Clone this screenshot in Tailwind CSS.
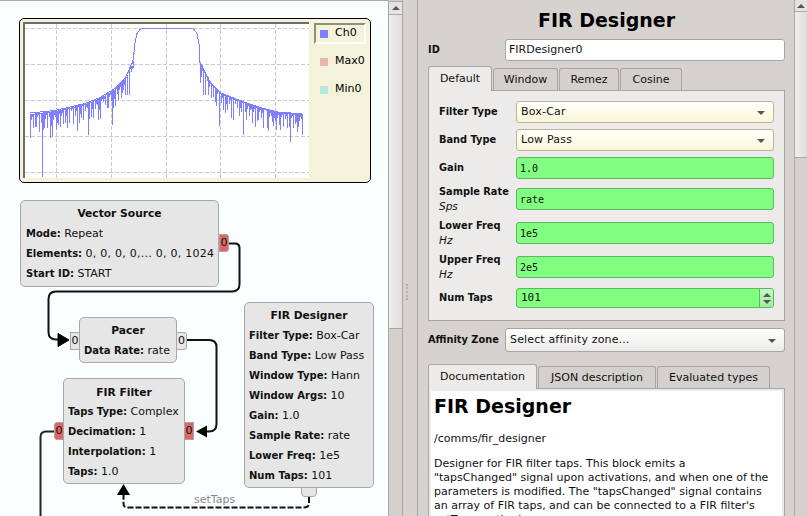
<!DOCTYPE html>
<html>
<head>
<meta charset="utf-8">
<script src="https://cdn.jsdelivr.net/npm/@tailwindcss/browser@4"></script>
</head>
<body class="m-0 overflow-hidden">
<div class="relative flex h-[516px] w-[807px] overflow-hidden bg-[#d6d2d0] font-['DejaVu_Sans',sans-serif] text-[11px] text-[#111]">

  <!-- canvas area -->
  <div class="relative h-full w-[388px] shrink-0 overflow-hidden border-t border-[#aaa] bg-[#fbfefe]">
    <!-- plot -->
    <div class="absolute left-[19px] top-[17px] flex h-[165px] w-[352px] rounded-[5px] border border-black bg-[#f4f2da] pl-[3px] pt-[3px]">
      <div class="h-[156px] w-[286px] shrink-0 overflow-hidden border-l-2 border-t-2 border-[#6e6e66] bg-white">
        <svg width="284" height="154" viewBox="0 0 284 154" shape-rendering="crispEdges">
          <g stroke="#c9c9c9" stroke-dasharray="4 2" fill="none">
            <path d="M0 4.500H284M0 40.500H284M0 76.500H284M0 112.500H284M0 148.500H284"/>
            <path d="M31.500 0V154M86.500 0V154M141.500 0V154M195.500 0V154M250.500 0V154"/>
          </g>
          <path id="curve" fill="none" stroke="#8080ff" stroke-width="1"/>
        </svg>
      </div>
      <div class="ml-[5px] mt-[1px] flex flex-col text-[11px] text-black">
        <div class="flex h-[21px] w-[52px] items-center border-2 border-b-[#fffff4] border-l-[#8f8e80] border-r-[#fffff4] border-t-[#8f8e80] pl-[4px]">
          <span class="mr-[7px] h-[8px] w-[8px] bg-[#8080ff]"></span>Ch0
        </div>
        <div class="mt-[7px] flex h-[21px] items-center pl-[6px]"><span class="mr-[7px] h-[8px] w-[8px] bg-[#e9b5aa]"></span>Max0</div>
        <div class="mt-[7px] flex h-[21px] items-center pl-[6px]"><span class="mr-[7px] h-[8px] w-[8px] bg-[#b3eadf]"></span>Min0</div>
      </div>
    </div>

    <!-- flow graph wires -->
    <svg class="absolute left-0 top-[-1px]" width="388" height="516" viewBox="0 0 388 516" fill="none">
      <path d="M229 243.500H235Q239.500 243.500 239.500 248V284Q239.500 291.500 232 291.500H56Q48.500 291.500 48.500 299V332Q48.500 339.500 56 339.500H60" stroke="#111" stroke-width="2"/>
      <path d="M58 333.500L69 340L58 346.500Z" fill="#000" stroke="#000"/>
      <path d="M187 340H209Q216.500 340 216.500 347V424Q216.500 431.500 209 431.500H204" stroke="#111" stroke-width="2"/>
      <path d="M207 425.500L196 431.500L207 437.500Z" fill="#000"/>
      <path d="M55 431.500H46Q40.500 431.500 40.500 437V516" stroke="#222" stroke-width="2"/>
      <path d="M309 497V503Q309 507.500 304 507.500H128Q123.500 507.500 123.500 504V494" stroke="#111" stroke-width="2" stroke-dasharray="6 2"/>
      <path d="M117 495L123.500 484L130 495Z" fill="#000"/>
    </svg>

    <!-- Vector Source -->
    <div class="absolute left-[20px] top-[199px] h-[87px] w-[199px] rounded-[5px] border border-[#a8a8a8] bg-[#e6e6e6] px-[5px] pt-[4px] text-[11px] leading-[20px] [&_b]:text-[10px]">
      <div class="mb-[2px] text-center text-[10.7px] leading-[17px] font-bold">Vector Source</div>
      <div><b>Mode:</b> Repeat</div>
      <div class="whitespace-nowrap"><b>Elements:</b> <span class="tracking-[0.25px]">0, 0, 0, 0,... 0, 0, 1024</span></div>
      <div><b>Start ID:</b> START</div>
    </div>
    <div class="absolute left-[219px] top-[233px] flex h-[18px] w-[10px] items-center justify-center rounded-r-[3px] border border-[#a8a8a8] bg-[#e06666] text-[11px]">0</div>

    <!-- Pacer -->
    <div class="absolute left-[79px] top-[316px] h-[46px] w-[98px] rounded-[5px] border border-[#a8a8a8] bg-[#e6e6e6] px-[4px] pt-[4px] text-[11px] leading-[20px] [&_b]:text-[10px]">
      <div class="mb-[2px] text-center text-[10.7px] leading-[17px] font-bold">Pacer</div>
      <div class="whitespace-nowrap"><b>Data Rate:</b> rate</div>
    </div>
    <div class="absolute left-[70px] top-[331px] flex h-[18px] w-[10px] items-center justify-center border border-[#a8a8a8] bg-[#e6e6e6] text-[11px]">0</div>
    <div class="absolute left-[176px] top-[331px] flex h-[18px] w-[11px] items-center justify-center rounded-r-[3px] border border-[#a8a8a8] bg-[#e6e6e6] text-[11px]">0</div>

    <!-- FIR Filter -->
    <div class="absolute left-[63px] top-[377px] h-[106px] w-[122px] rounded-[5px] border border-[#a8a8a8] bg-[#e6e6e6] px-[4px] pt-[3px] text-[11px] leading-[20px] [&_b]:text-[10px]">
      <div class="mb-[-1px] text-center text-[10.7px] leading-[21px] font-bold">FIR Filter</div>
      <div class="whitespace-nowrap"><b>Taps Type:</b> Complex</div>
      <div class="whitespace-nowrap"><b>Decimation:</b> 1</div>
      <div class="whitespace-nowrap"><b>Interpolation:</b> 1</div>
      <div><b>Taps:</b> 1.0</div>
    </div>
    <div class="absolute left-[54px] top-[421px] flex h-[18px] w-[10px] items-center justify-center rounded-l-[3px] border border-[#a8a8a8] bg-[#e06666] text-[11px]">0</div>
    <div class="absolute left-[184px] top-[421px] flex h-[18px] w-[10px] items-center justify-center border border-[#a8a8a8] bg-[#e06666] text-[11px]">0</div>

    <!-- FIR Designer block -->
    <div class="absolute left-[244px] top-[301px] h-[186px] w-[130px] rounded-[5px] border border-[#a8a8a8] bg-[#e6e6e6] px-[4px] pt-[2px] text-[11px] leading-[20px] [&_b]:text-[10px]">
      <div class="text-center text-[10.7px] leading-[21px] font-bold">FIR Designer</div>
      <div class="whitespace-nowrap"><b>Filter Type:</b> Box-Car</div>
      <div class="whitespace-nowrap"><b>Band Type:</b> Low Pass</div>
      <div class="whitespace-nowrap"><b>Window Type:</b> Hann</div>
      <div class="whitespace-nowrap"><b>Window Args:</b> 10</div>
      <div><b>Gain:</b> 1.0</div>
      <div class="whitespace-nowrap"><b>Sample Rate:</b> rate</div>
      <div class="whitespace-nowrap"><b>Lower Freq:</b> 1e5</div>
      <div><b>Num Taps:</b> 101</div>
    </div>
    <div class="absolute left-[301px] top-[486px] h-[10px] w-[16px] rounded-b-[4px] border border-[#a8a8a8] bg-[#e6e6e6]"></div>
    <div class="absolute left-[194px] top-[492px] text-[11px] leading-[13px] text-[#888]">setTaps</div>
  </div>

  <!-- left scrollbar -->
  <div class="flex h-full w-[15px] shrink-0 flex-col border-x border-[#a9a6a4] bg-[#d3d0ce] pt-[1px]">
    <div class="flex h-[14px] shrink-0 items-center justify-center border-b border-t border-[#aaa] bg-[#e6e4e2]"><span class="h-0 w-0 border-x-[4px] border-b-[4px] border-x-transparent border-b-[#555]"></span></div>
    <div class="h-[314px] shrink-0 border-b border-[#a9a6a4] bg-gradient-to-r from-[#f0efed] to-[#e0dedc]"></div>
  </div>

  <!-- splitter -->
  <div class="relative w-[15px] shrink-0 border-r border-[#a9a6a4]">
    <div class="absolute left-[3px] top-[284px] h-[16px] w-[2px] border-l-2 border-dotted border-[#b5b2b0]"></div>
  </div>

  <!-- properties -->
  <div class="flex h-full w-[377px] shrink-0 flex-col overflow-hidden px-[10px] [&_b]:text-[9.8px] [&>*]:shrink-0">
    <h1 class="mt-[7px] h-[26px] text-center text-[19px] leading-[26px] font-bold text-black">FIR Designer</h1>
    <div class="mt-[6px] flex h-[22px] items-center">
      <b class="w-[77px]">ID</b>
      <div class="flex h-[22px] w-[280px] items-center rounded-[3px] border border-[#a8a5a3] bg-white px-[3px] text-[11px]">FIRDesigner0</div>
    </div>
    <div class="mt-[5px] flex h-[24px] items-end text-[11px]">
      <div class="z-10 mb-[-1px] flex h-[25px] w-[64px] items-center justify-center rounded-t-[3px] border border-b-0 border-[#a8a5a3] bg-[#ecebe9]">Default</div>
      <div class="ml-[1px] flex h-[22px] w-[65px] items-center justify-center rounded-t-[3px] border border-b-0 border-[#a8a5a3] bg-[#d3d0ce] pt-[1px]">Window</div>
      <div class="ml-[1px] flex h-[22px] w-[60px] items-center justify-center rounded-t-[3px] border border-b-0 border-[#a8a5a3] bg-[#d3d0ce] pt-[1px]">Remez</div>
      <div class="ml-[1px] flex h-[22px] w-[62px] items-center justify-center rounded-t-[3px] border border-b-0 border-[#a8a5a3] bg-[#d3d0ce] pt-[1px]">Cosine</div>
    </div>
    <div class="flex h-[231px] w-[357px] flex-col border border-[#a8a5a3] bg-[#ecebe9] pl-[10px] pt-[10px] [&>*]:shrink-0">
      <div class="flex h-[22px] items-center"><b class="w-[77px] pt-[1px]">Filter Type</b><div class="flex h-[22px] w-[258px] items-center justify-between rounded-[3px] border border-[#b9b59f] bg-gradient-to-b from-[#fffffa] to-[#fbf6d8] pl-[4px] pr-[8px] pt-[1px] text-[11px] tracking-[0.2px]">Box-Car<span class="h-0 w-0 border-x-[4px] border-t-[4px] border-x-transparent border-t-[#555]"></span></div></div>
      <div class="mt-[6px] flex h-[22px] items-center"><b class="w-[77px] pt-[1px]">Band Type</b><div class="flex h-[22px] w-[258px] items-center justify-between rounded-[3px] border border-[#b9b59f] bg-gradient-to-b from-[#fffffa] to-[#fbf6d8] pl-[4px] pr-[8px] pt-[1px] text-[11px] tracking-[0.2px]">Low Pass<span class="h-0 w-0 border-x-[4px] border-t-[4px] border-x-transparent border-t-[#555]"></span></div></div>
      <div class="mt-[6px] flex h-[22px] items-center"><b class="w-[77px]">Gain</b><div class="flex h-[22px] w-[258px] items-center rounded-[3px] border border-[#5fb85f] bg-[#80ff80] px-[3px] font-['DejaVu_Sans_Mono',monospace] text-[10px]">1.0</div></div>
      <div class="mt-[9px] flex h-[22px] items-center"><div class="w-[77px] leading-[14px]"><b class="block whitespace-nowrap">Sample Rate</b><i class="block text-[10.5px]">Sps</i></div><div class="flex h-[22px] w-[258px] items-center rounded-[3px] border border-[#5fb85f] bg-[#80ff80] px-[3px] font-['DejaVu_Sans_Mono',monospace] text-[10px]">rate</div></div>
      <div class="mt-[12px] flex h-[22px] items-center"><div class="w-[77px] leading-[14px]"><b class="block whitespace-nowrap">Lower Freq</b><i class="block text-[10.5px]">Hz</i></div><div class="flex h-[22px] w-[258px] items-center rounded-[3px] border border-[#5fb85f] bg-[#80ff80] px-[3px] font-['DejaVu_Sans_Mono',monospace] text-[10px]">1e5</div></div>
      <div class="mt-[12px] flex h-[22px] items-center"><div class="w-[77px] leading-[14px]"><b class="block whitespace-nowrap">Upper Freq</b><i class="block text-[10.5px]">Hz</i></div><div class="flex h-[22px] w-[258px] items-center rounded-[3px] border border-[#5fb85f] bg-[#80ff80] px-[3px] font-['DejaVu_Sans_Mono',monospace] text-[10px]">2e5</div></div>
      <div class="mt-[10px] flex h-[20px] items-center"><b class="w-[77px] pt-[1px]">Num Taps</b><div class="flex h-[20px] w-[258px] items-center justify-between overflow-hidden rounded-[3px] border border-[#5fb85f] bg-[#80ff80] pl-[4px] font-['DejaVu_Sans_Mono',monospace] text-[11px]">101<div class="flex h-full w-[14px] flex-col items-center justify-center gap-[3px] border-l border-[#5fb85f] bg-gradient-to-b from-[#c8f8c8] to-[#a0eca0]"><span class="h-0 w-0 border-x-[4px] border-b-[4px] border-x-transparent border-b-[#555]"></span><span class="h-0 w-0 border-x-[4px] border-t-[4px] border-x-transparent border-t-[#555]"></span></div></div></div>
    </div>
    <div class="mt-[7px] flex h-[24px] items-center">
      <b class="w-[77px] whitespace-nowrap pt-[1px]">Affinity Zone</b>
      <div class="flex h-[24px] w-[280px] items-center justify-between rounded-[3px] border border-[#a8a5a3] bg-gradient-to-b from-white to-[#ecebe9] pl-[4px] pr-[8px] pt-[1px] text-[11px] tracking-[0.15px]">Select affinity zone...<span class="h-0 w-0 border-x-[4px] border-t-[4px] border-x-transparent border-t-[#555]"></span></div>
    </div>
    <div class="mt-[12px] flex h-[24px] items-end text-[11px]">
      <div class="z-10 mb-[-1px] flex h-[25px] w-[109px] items-center justify-center rounded-t-[3px] border border-b-0 border-[#a8a5a3] bg-[#ecebe9] pt-[1px]">Documentation</div>
      <div class="ml-[1px] flex h-[22px] w-[118px] items-center justify-center rounded-t-[3px] border border-b-0 border-[#a8a5a3] bg-[#d3d0ce] pt-[2px]">JSON description</div>
      <div class="ml-[1px] flex h-[22px] w-[113px] items-center justify-center rounded-t-[3px] border border-b-0 border-[#a8a5a3] bg-[#d3d0ce] pt-[2px]">Evaluated types</div>
    </div>
    <div class="h-[200px] w-[357px] overflow-hidden border border-[#a8a5a3] bg-[#ecebe9] px-[2px] pt-[2px]">
      <div class="h-full bg-white pl-[3px] text-[11px] leading-[14px]">
        <h2 class="text-[19px] leading-[30px] font-bold text-black">FIR Designer</h2>
        <p class="mt-[11px]">/comms/fir_designer</p>
        <p class="mt-[11px] whitespace-nowrap">Designer for FIR filter taps. This block emits a<br>"tapsChanged" signal upon activations, and when one of the<br>parameters is modified. The "tapsChanged" signal contains<br>an array of FIR taps, and can be connected to a FIR filter's<br>setTaps method.</p>
      </div>
    </div>
  </div>

  <!-- right scrollbar -->
  <div class="absolute right-0 top-0 flex h-full w-[13px] flex-col border-l border-[#a9a6a4] bg-[#d3d0ce]">
    <div class="flex h-[12px] shrink-0 items-center justify-center border-b border-[#aaa] bg-[#e6e4e2]"><span class="h-0 w-0 border-x-[4px] border-b-[4px] border-x-transparent border-b-[#555]"></span></div>
    <div class="h-[146px] shrink-0 border-b border-[#a9a6a4] bg-gradient-to-r from-[#f0efed] to-[#e0dedc]"></div>
  </div>
</div>
<script>
(function () {
  var env = [[5,89],[30,86],[60,79],[75,73],[90,64],[100,54],[105,43],[108,36],[110,19],[112,9],[115,5],[117,4],[167,4],[169,5],[172,9],[174,19],[175,38],[185,58],[195,68],[215,76],[235,83],[255,88],[277,89]];
  function top(x) {
    for (var i = 0; i < env.length - 1; i++) {
      if (x <= env[i + 1][0]) {
        var a = env[i], b = env[i + 1];
        return a[1] + (b[1] - a[1]) * (x - a[0]) / (b[0] - a[0]);
      }
    }
    return 89;
  }
  var deep = [[5,114],[8,104],[11,103],[14,108],[17,153],[19,104],[22,104],[25,114],[27,113],[31,106],[33,101],[35,103],[38,100],[42,104],[44,99],[48,100],[52,107],[56,94],[58,96],[63,111],[64,95],[68,94],[73,96],[75,95],[80,81],[83,84],[87,101],[90,82],[93,76],[97,69],[100,71],[102,71],[104,71],[108,44],
    [175,59],[178,71],[180,71],[183,71],[186,74],[188,73],[191,82],[194,102],[198,86],[202,86],[206,94],[208,96],[212,84],[216,88],[218,111],[221,96],[227,99],[230,103],[233,96],[238,104],[240,86],[243,107],[247,98],[251,106],[255,106],[258,103],[262,104],[265,118],[268,104],[271,98],[273,103],[277,111]];
  var depth = [6, 14, 4, 10, 18, 7, 5, 15, 9, 6, 12, 4];
  var d = '', i, k = 0, taken = {};
  deep.forEach(function (p) { taken[p[0]] = p[1]; });
  for (i = 5; i <= 277; i++) {
    if (i > 109 && i < 175) continue;
    var y = Math.round(top(i)) + 0.5;
    if (taken[i]) { d += 'M' + (i + 0.5) + ' ' + y + 'V' + taken[i]; }
    else if (i % 2 === 0) {
      var h = depth[k++ % depth.length];
      d += 'M' + (i + 0.5) + ' ' + y + 'V' + (y + h);
      d += 'M' + (i + 1.5) + ' ' + y + 'V' + (y + Math.floor(h / 2));
    }
    d += 'M' + i + ' ' + (y + 1) + 'H' + (i + 1);
  }
  var line = 'M5 ' + top(5);
  for (i = 1; i < env.length; i++) line += 'L' + env[i][0] + ' ' + (env[i][1] + 0.5);
  document.getElementById('curve').setAttribute('d', line + d);
})();
</script>
</body>
</html>
